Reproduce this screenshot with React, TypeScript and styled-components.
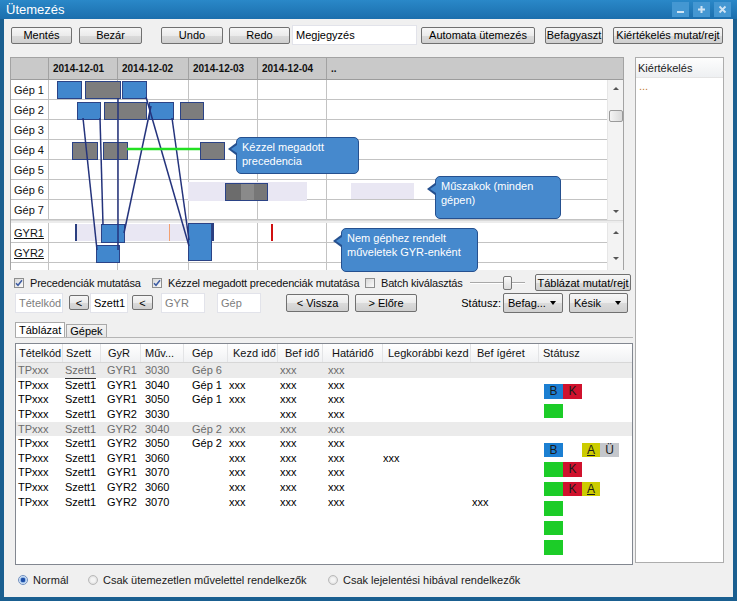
import React from "react";
import styled, { createGlobalStyle } from "styled-components";

const GlobalStyle = createGlobalStyle`
  html, body { margin: 0; padding: 0; background: #185c8c; }
  body { font-family: "Liberation Sans", Arial, Helvetica, sans-serif; font-size: 11px; color: #000; }
  *, *::before, *::after { box-sizing: border-box; }
`;

/* ---------- window frame ---------- */
const Window = styled.div`
  width: 737px;
  height: 601px;
  display: flex;
  flex-direction: column;
  background: #1a5f90;
  overflow: hidden;
`;
const TitleBar = styled.div`
  flex: none;
  height: 19px;
  display: flex;
  align-items: center;
  justify-content: space-between;
  padding: 0 6px 0 6px;
  background: linear-gradient(#2a88c8, #1b6ead);
`;
const TitleText = styled.span`
  color: #fff;
  font-size: 13px;
  line-height: 19px;
`;
const WinButtons = styled.div`
  display: flex;
  gap: 4px;
`;
const WinButton = styled.div`
  width: 17px;
  height: 15px;
  background: #4497d2;
  display: flex;
  align-items: center;
  justify-content: center;
`;
const Body = styled.div`
  flex: 1;
  margin: 0 4px 4px;
  background: #f0f0f0;
  display: flex;
  flex-direction: column;
  padding: 6px 0 0 6px;
`;

/* ---------- buttons & inputs ---------- */
const Btn = styled.div<{ $w: number; $ml?: number; $h?: number }>`
  flex: none;
  width: ${(p) => p.$w}px;
  height: ${(p) => p.$h ?? 17}px;
  margin-left: ${(p) => p.$ml ?? 0}px;
  border: 1px solid #707070;
  border-radius: 2px;
  background: linear-gradient(#f6f6f6 0%, #ebebeb 50%, #dbdbdb 51%, #cfcfcf 100%);
  display: flex;
  align-items: center;
  justify-content: center;
  white-space: nowrap;
  color: #000;
`;
const Input = styled.div<{ $w: number; $ml?: number; $muted?: boolean; $h?: number }>`
  flex: none;
  width: ${(p) => p.$w}px;
  height: ${(p) => p.$h ?? 20}px;
  margin-left: ${(p) => p.$ml ?? 0}px;
  background: #fff;
  border: 1px solid #e2e3ea;
  display: flex;
  align-items: center;
  padding-left: 3px;
  color: ${(p) => (p.$muted ? "#7d7d7d" : "#000")};
  white-space: nowrap;
`;
const Select = styled(Btn)`
  justify-content: space-between;
  padding: 0 6px 0 4px;
  height: 20px;
`;
const Caret = styled.span`
  width: 0;
  height: 0;
  border-left: 3.5px solid transparent;
  border-right: 3.5px solid transparent;
  border-top: 4px solid #000;
`;

const Toolbar = styled.div`
  flex: none;
  height: 20px;
  display: flex;
  align-items: center;
`;

/* ---------- main ---------- */
const Main = styled.div`
  flex: none;
  height: 508px;
  margin-top: 12px;
  display: flex;
  align-items: flex-start;
`;
const LeftCol = styled.div`
  width: 623px;
  height: 508px;
  display: flex;
  flex-direction: column;
`;
const RightPanel = styled.div`
  margin-left: 2px;
  width: 89px;
  height: 506px;
  border: 1px solid #adadad;
  background: #fff;
  display: flex;
  flex-direction: column;
`;
const RightHead = styled.div`
  height: 20px;
  background: linear-gradient(#fdfdfd, #eef0f2);
  border-bottom: 1px solid #e4e4e4;
  padding-left: 2px;
  display: flex;
  align-items: center;
  color: #1b1b1b;
`;
const RightDots = styled.div`
  padding: 3px 0 0 3px;
  color: #c07a30;
  line-height: 11px;
`;

/* ---------- gantt ---------- */
const GRID = "38px 69px 71px 69px 69px 1fr";
const Gantt = styled.div`
  position: relative;
  width: 614px;
  border: 1px solid #a3a3a3;
  border-bottom: none;
  background: #fff;
  display: flex;
  flex-direction: column;
`;
const GHead = styled.div`
  display: grid;
  grid-template-columns: ${GRID};
  height: 22px;
  background: #c9c9c9;
  border-bottom: 1px solid #9c9c9c;
`;
const GHeadCell = styled.div`
  border-right: 1px solid #a2a2a2;
  padding-left: 4px;
  display: flex;
  align-items: center;
  font-weight: bold;
  font-size: 10px;
  color: #111;
  &:last-child { border-right: none; }
`;
const Pane = styled.div<{ $h: number }>`
  height: ${(p) => p.$h}px;
  display: flex;
  overflow: hidden;
`;
const PaneRows = styled.div`
  flex: 1;
  display: flex;
  flex-direction: column;
`;
const GRow = styled.div`
  flex: none;
  display: grid;
  grid-template-columns: ${GRID};
  height: 20px;
  border-bottom: 1px solid #c3c3c3;
`;
const GCell = styled.div`
  border-right: 1px solid #c3c3c3;
  &:last-child { border-right: none; }
`;
const GLabel = styled(GCell)<{ $u?: boolean }>`
  display: flex;
  align-items: center;
  padding-left: 3px;
  text-decoration: ${(p) => (p.$u ? "underline" : "none")};
  color: #111;
`;
const Splitter = styled.div`
  height: 3px;
  background: #ececec;
  border-top: 1px solid #d8d8d8;
`;
const VScroll = styled.div`
  width: 16px;
  flex: none;
  background: #f3f3f3;
  border-left: 1px solid #e6e6e6;
  display: flex;
  flex-direction: column;
  align-items: center;
`;
const ArrowUp = styled.span<{ $mt?: number }>`
  margin-top: ${(p) => p.$mt ?? 0}px;
  width: 0;
  height: 0;
  border-left: 3px solid transparent;
  border-right: 3px solid transparent;
  border-bottom: 3px solid #555;
`;
const ArrowDown = styled.span<{ $mb?: number }>`
  margin-bottom: ${(p) => p.$mb ?? 0}px;
  width: 0;
  height: 0;
  border-left: 3px solid transparent;
  border-right: 3px solid transparent;
  border-top: 3px solid #555;
`;
const Thumb = styled.div`
  margin-top: 20px;
  width: 14px;
  height: 12px;
  border: 1px solid #9a9a9a;
  border-radius: 2px;
  background: linear-gradient(90deg, #f4f4f4, #dadada);
`;
const Spacer = styled.div`
  flex: 1;
`;

const OX = 11;
const OY = 58;
const Canvas = styled.div`
  position: absolute;
  left: 0;
  top: 0;
  right: 0;
  bottom: 0;
  pointer-events: none;
`;
const Bar = styled.div<{ $k: "blue" | "gray" | "stripe" }>`
  position: absolute;
  border: 1.5px solid #2b4386;
  background: ${(p) =>
    p.$k === "blue"
      ? "#4187cd"
      : p.$k === "gray"
      ? "#7d7d7d"
      : "linear-gradient(90deg, #6c6c6c 0 36%, #8a8a8a 36% 68%, #777 68% 100%)"};
`;
const Shift = styled.div`
  position: absolute;
  background: #e9e7f3;
`;
const Tick = styled.div`
  position: absolute;
`;
const LinesSvg = styled.svg`
  position: absolute;
  left: 0;
  top: 0;
  overflow: visible;
`;
const Callout = styled.div<{ $py: number }>`
  position: absolute;
  background: #4689cd;
  border: 1.5px solid #25508f;
  border-radius: 5px;
  color: #fff;
  font-size: 11px;
  line-height: 13.5px;
  padding: 3px 4px 0 5px;
  &::before {
    content: "";
    position: absolute;
    left: -9px;
    top: ${(p) => p.$py - 6}px;
    border-top: 6px solid transparent;
    border-bottom: 6px solid transparent;
    border-right: 8px solid #25508f;
  }
  &::after {
    content: "";
    position: absolute;
    left: -6px;
    top: ${(p) => p.$py - 4.5}px;
    border-top: 4.5px solid transparent;
    border-bottom: 4.5px solid transparent;
    border-right: 6px solid #4689cd;
  }
`;

/* ---------- checkbox row ---------- */
const CheckRow = styled.div`
  flex: none;
  margin-top: 4px;
  height: 17px;
  display: flex;
  align-items: center;
  padding-left: 4px;
`;
const CheckGroup = styled.div<{ $w: number }>`
  width: ${(p) => p.$w}px;
  flex: none;
  display: flex;
  align-items: center;
  gap: 6px;
  white-space: nowrap;
  letter-spacing: -0.2px;
  color: #111;
`;
const Box = styled.span`
  width: 10px;
  height: 10px;
  flex: none;
  border: 1px solid #8e8f8f;
  background: linear-gradient(135deg, #d8d8d8, #fbfbfb);
  display: flex;
  align-items: center;
  justify-content: center;
`;
const Slider = styled.div`
  width: 55px;
  flex: none;
  height: 14px;
  display: flex;
  align-items: center;
  position: relative;
`;
const Track = styled.div`
  flex: 1;
  height: 2px;
  border-top: 1px solid #a8a8a8;
  border-bottom: 1px solid #fff;
`;
const SliderThumb = styled.div`
  position: absolute;
  left: 33px;
  top: 0;
  width: 9px;
  height: 14px;
  border: 1px solid #767676;
  border-radius: 2px;
  background: linear-gradient(#fbfbfb, #dcdcdc);
`;

/* ---------- filter row ---------- */
const FilterRow = styled.div`
  flex: none;
  margin-top: 1px;
  height: 21px;
  display: flex;
  align-items: center;
`;
const Label = styled.div<{ $w: number }>`
  width: ${(p) => p.$w}px;
  flex: none;
  text-align: right;
  white-space: nowrap;
`;

/* ---------- tabs & table ---------- */
const TabStrip = styled.div`
  flex: none;
  margin-top: 9px;
  height: 15px;
  display: flex;
  align-items: flex-end;
  padding-left: 5px;
`;
const Tab = styled.div<{ $on?: boolean }>`
  height: ${(p) => (p.$on ? 15 : 13)}px;
  padding: 0 3px 0 3px;
  border: 1px solid #a9a9a9;
  border-bottom: none;
  background: ${(p) => (p.$on ? "#fff" : "linear-gradient(#f2f2f2, #e4e4e4)")};
  display: flex;
  align-items: center;
  margin-left: ${(p) => (p.$on ? 0 : 1)}px;
`;
const TabPanel = styled.div`
  flex: 1;
  margin-left: 5px;
  width: 618px;
  border-top: 1px solid #b5b5b5;
  display: flex;
  flex-direction: column;
`;
const TCOLS = "47px 38px 40px 43px 44px 50px 45px 60px 88px 68px 1fr";
const Table = styled.div`
  flex: 1;
  margin-top: 5px;
  border: 1px solid #828790;
  background: #fff;
  display: flex;
  flex-direction: column;
`;
const THead = styled.div`
  flex: none;
  display: grid;
  grid-template-columns: ${TCOLS};
  height: 19px;
  background: linear-gradient(#ffffff, #f0f1f3);
  border-bottom: 1px solid #d7d7d7;
`;
const THCell = styled.div<{ $pl: number }>`
  padding-left: ${(p) => p.$pl}px;
  border-right: 1px solid #e3e4e6;
  display: flex;
  align-items: center;
  white-space: nowrap;
  color: #111;
  &:last-child { border-right: none; }
`;
const TBody = styled.div`
  display: grid;
  flex: 1;
  align-content: start;
`;
const Layer = styled.div`
  grid-area: 1 / 1;
  display: flex;
  flex-direction: column;
`;
const TRow = styled.div<{ $dim?: boolean }>`
  display: grid;
  grid-template-columns: ${TCOLS};
  height: 14.65px;
  background: ${(p) => (p.$dim ? "#ebebeb" : "transparent")};
  color: ${(p) => (p.$dim ? "#6b6b6b" : "#000")};
`;
const TCell = styled.div<{ $pl: number }>`
  padding-left: ${(p) => p.$pl}px;
  line-height: 14.65px;
  white-space: nowrap;
  overflow: hidden;
`;
const Focused = styled.span`
  border-top: 1px solid #333;
`;
const StatusLayer = styled(Layer)`
  padding: 21px 0 0 528px;
`;
const Slot = styled.div`
  height: 19.5px;
  display: flex;
`;
const Badge = styled.div<{ $c: string; $w?: number }>`
  width: ${(p) => p.$w ?? 19}px;
  height: 14.5px;
  background: ${(p) => p.$c};
  display: flex;
  align-items: center;
  justify-content: center;
  font-size: 12px;
  color: #1a1a1a;
`;
const Gap = styled.div`
  width: 19px;
`;

/* ---------- radio row ---------- */
const RadioRow = styled.div`
  flex: none;
  margin-top: 7px;
  height: 16px;
  display: flex;
  align-items: center;
  padding-left: 8px;
`;
const RadioGroup = styled.div<{ $w: number }>`
  width: ${(p) => p.$w}px;
  flex: none;
  display: flex;
  align-items: center;
  gap: 5px;
  white-space: nowrap;
  color: #1a1a1a;
`;
const Radio = styled.span<{ $on?: boolean }>`
  width: 10px;
  height: 10px;
  flex: none;
  border-radius: 50%;
  border: 1px solid ${(p) => (p.$on ? "#6f8fbf" : "#b9b9b9")};
  background: ${(p) =>
    p.$on
      ? "radial-gradient(circle, #1f4fa8 0 2px, #8fb6e6 2.5px, #e8f0fa 4px)"
      : "radial-gradient(circle, #f4f4f4 0 2px, #e0e0e0 4px)"};
`;

/* ---------- data ---------- */
type BarDef = { x1: number; x2: number; y1: number; y2: number; k: "blue" | "gray" | "stripe" };
const BARS: BarDef[] = [
  { x1: 57, x2: 81, y1: 81, y2: 98, k: "blue" },
  { x1: 85, x2: 120, y1: 81, y2: 98, k: "gray" },
  { x1: 122, x2: 146, y1: 81, y2: 98, k: "blue" },
  { x1: 77, x2: 100, y1: 102, y2: 119, k: "blue" },
  { x1: 104, x2: 146, y1: 102, y2: 119, k: "gray" },
  { x1: 149, x2: 173, y1: 102, y2: 119, k: "blue" },
  { x1: 180, x2: 203, y1: 102, y2: 119, k: "gray" },
  { x1: 72, x2: 97, y1: 142, y2: 159, k: "gray" },
  { x1: 103, x2: 127, y1: 142, y2: 159, k: "gray" },
  { x1: 200, x2: 224, y1: 142, y2: 159, k: "gray" },
  { x1: 225, x2: 267, y1: 183, y2: 200, k: "stripe" },
  { x1: 101, x2: 124, y1: 224, y2: 242, k: "blue" },
  { x1: 188, x2: 211, y1: 223, y2: 260, k: "blue" },
  { x1: 96, x2: 119, y1: 245, y2: 262, k: "blue" },
];
const SHIFTS = [
  { x1: 188, x2: 307, y1: 182, y2: 201 },
  { x1: 351, x2: 414, y1: 183, y2: 199 },
  { x1: 75, x2: 188, y1: 224, y2: 241 },
];
const TICKS = [
  { x: 75, w: 1.5, y1: 224, y2: 241, c: "#2b3f80" },
  { x: 169, w: 1.2, y1: 224, y2: 241, c: "#f3a070" },
  { x: 212, w: 2, y1: 223, y2: 241, c: "#2b3f80" },
  { x: 271, w: 2, y1: 224, y2: 241, c: "#d01010" },
];
const LINES = [
  [83, 118, 97, 250],
  [118, 98, 118, 250],
  [100, 118, 103, 225],
  [151, 106, 124, 233],
  [146, 97, 189, 246],
  [172, 118, 189, 240],
];

const HEADERS = ["Tételkód", "Szett", "GyR", "Műv...", "Gép", "Kezd idő", "Bef idő", "Határidő", "Legkorábbi kezd", "Bef ígéret", "Státusz"];
const HPAD = [3, 3, 7, 4, 8, 5, 7, 9, 5, 6, 4];
const DPAD = [2, 2, 6, 4, 8, 1, 2, 5, 0, 1, 0];
type RowDef = { c: string[]; dim?: boolean };
const ROWS: RowDef[] = [
  { c: ["TPxxx", "Szett1", "GYR1", "3030", "Gép 6", "", "xxx", "xxx", "", ""], dim: true },
  { c: ["TPxxx", "Szett1", "GYR1", "3040", "Gép 1", "xxx", "xxx", "xxx", "", ""] },
  { c: ["TPxxx", "Szett1", "GYR1", "3050", "Gép 1", "xxx", "xxx", "xxx", "", ""] },
  { c: ["TPxxx", "Szett1", "GYR2", "3030", "", "", "xxx", "xxx", "", ""] },
  { c: ["TPxxx", "Szett1", "GYR2", "3040", "Gép 2", "xxx", "xxx", "xxx", "", ""], dim: true },
  { c: ["TPxxx", "Szett1", "GYR2", "3050", "Gép 2", "xxx", "xxx", "xxx", "", ""] },
  { c: ["TPxxx", "Szett1", "GYR1", "3060", "", "xxx", "xxx", "xxx", "xxx", ""] },
  { c: ["TPxxx", "Szett1", "GYR1", "3070", "", "xxx", "xxx", "xxx", "", ""] },
  { c: ["TPxxx", "Szett1", "GYR2", "3060", "", "xxx", "xxx", "xxx", "", ""] },
  { c: ["TPxxx", "Szett1", "GYR2", "3070", "", "xxx", "xxx", "xxx", "", "xxx"] },
];
const B = "#1b7fd2";
const K = "#d0122d";
const G = "#1ccc28";
const A = "#cccc00";
const U = "#c4c7cc";
type St = { c: string; t?: string; u?: boolean; w?: number } | null;
const STATUS: St[][] = [
  [{ c: B, t: "B" }, { c: K, t: "K" }],
  [{ c: G }],
  [],
  [{ c: B, t: "B" }, null, { c: A, t: "A", u: true, w: 18 }, { c: U, t: "Ü" }],
  [{ c: G }, { c: K, t: "K" }],
  [{ c: G }, { c: K, t: "K" }, { c: A, t: "A", u: true, w: 18 }],
  [{ c: G }],
  [{ c: G }],
  [{ c: G }],
];

const Check = () => (
  <svg width="8" height="8" viewBox="0 0 8 8">
    <path d="M1 4.2 L3 6.3 L7 1.2" fill="none" stroke="#3c5ba3" strokeWidth="1.5" />
  </svg>
);

export default function App() {
  return (
    <>
      <GlobalStyle />
      <Window>
        <TitleBar>
          <TitleText>Ütemezés</TitleText>
          <WinButtons>
            <WinButton>
              <svg width="9" height="9" viewBox="0 0 9 9"><rect x="1" y="6" width="7" height="2" fill="#cfe4f4" /></svg>
            </WinButton>
            <WinButton>
              <svg width="9" height="9" viewBox="0 0 9 9"><path d="M4.5 1 V8 M1 4.5 H8" stroke="#cfe4f4" strokeWidth="2" /></svg>
            </WinButton>
            <WinButton>
              <svg width="9" height="9" viewBox="0 0 9 9"><path d="M1.5 1.5 L7.5 7.5 M7.5 1.5 L1.5 7.5" stroke="#cfe4f4" strokeWidth="1.8" /></svg>
            </WinButton>
          </WinButtons>
        </TitleBar>
        <Body>
          <Toolbar>
            <Btn $w={61} $ml={1}>Mentés</Btn>
            <Btn $w={63} $ml={7}>Bezár</Btn>
            <Btn $w={62} $ml={19}>Undo</Btn>
            <Btn $w={61} $ml={6}>Redo</Btn>
            <Input $w={125} $ml={2}>Megjegyzés</Input>
            <Btn $w={114} $ml={4}>Automata ütemezés</Btn>
            <Btn $w={58} $ml={10}>Befagyaszt</Btn>
            <Btn $w={110} $ml={10}>Kiértékelés mutat/rejt</Btn>
          </Toolbar>
          <Main>
            <LeftCol>
              <Gantt>
                <GHead>
                  <GHeadCell />
                  <GHeadCell>2014-12-01</GHeadCell>
                  <GHeadCell>2014-12-02</GHeadCell>
                  <GHeadCell>2014-12-03</GHeadCell>
                  <GHeadCell>2014-12-04</GHeadCell>
                  <GHeadCell>..</GHeadCell>
                </GHead>
                <Pane $h={140}>
                  <PaneRows>
                    {["Gép 1", "Gép 2", "Gép 3", "Gép 4", "Gép 5", "Gép 6", "Gép 7"].map((g) => (
                      <GRow key={g}>
                        <GLabel>{g}</GLabel>
                        <GCell />
                        <GCell />
                        <GCell />
                        <GCell />
                        <GCell />
                      </GRow>
                    ))}
                  </PaneRows>
                  <VScroll>
                    <ArrowUp $mt={7} />
                    <Thumb />
                    <Spacer />
                    <ArrowDown $mb={7} />
                  </VScroll>
                </Pane>
                <Splitter />
                <Pane $h={47}>
                  <PaneRows>
                    {["GYR1", "GYR2", ""].map((g, i) => (
                      <GRow key={i}>
                        <GLabel $u>{g}</GLabel>
                        <GCell />
                        <GCell />
                        <GCell />
                        <GCell />
                        <GCell />
                      </GRow>
                    ))}
                  </PaneRows>
                  <VScroll>
                    <ArrowUp $mt={8} />
                    <Spacer />
                    <ArrowDown $mb={10} />
                  </VScroll>
                </Pane>
                <Canvas>
                  {SHIFTS.map((s, i) => (
                    <Shift key={i} style={{ left: s.x1 - OX, top: s.y1 - OY, width: s.x2 - s.x1, height: s.y2 - s.y1 }} />
                  ))}
                  {BARS.map((b, i) => (
                    <Bar key={i} $k={b.k} style={{ left: b.x1 - OX, top: b.y1 - OY, width: b.x2 - b.x1 + 1, height: b.y2 - b.y1 + 1 }} />
                  ))}
                  {TICKS.map((t, i) => (
                    <Tick key={i} style={{ left: t.x - OX, top: t.y1 - OY, width: t.w, height: t.y2 - t.y1, background: t.c }} />
                  ))}
                  <LinesSvg width="614" height="214">
                    <g transform={`translate(${-OX} ${-OY})`}>
                      {LINES.map((l, i) => (
                        <line key={i} x1={l[0]} y1={l[1]} x2={l[2]} y2={l[3]} stroke="#24337c" strokeWidth="1.5" />
                      ))}
                      <line x1={127} y1={149} x2={200} y2={149} stroke="#22e022" strokeWidth="2.5" />
                    </g>
                  </LinesSvg>
                  <Callout $py={11} style={{ left: 236 - OX, top: 137 - OY, width: 123, height: 37 }}>
                    Kézzel megadott<br />precedencia
                  </Callout>
                  <Callout $py={12} style={{ left: 435 - OX, top: 176 - OY, width: 126, height: 43 }}>
                    Műszakok (minden<br />gépen)
                  </Callout>
                  <Callout $py={12} style={{ left: 341 - OX, top: 228 - OY, width: 137, height: 44 }}>
                    Nem géphez rendelt<br />műveletek GYR-enként
                  </Callout>
                </Canvas>
              </Gantt>

              <CheckRow>
                <CheckGroup $w={138}>
                  <Box><Check /></Box>Precedenciák mutatása
                </CheckGroup>
                <CheckGroup $w={213}>
                  <Box><Check /></Box>Kézzel megadott precedenciák mutatása
                </CheckGroup>
                <CheckGroup $w={105}>
                  <Box />Batch kiválasztás
                </CheckGroup>
                <Slider>
                  <Track />
                  <SliderThumb />
                </Slider>
                <Btn $w={96} $ml={10}>Táblázat mutat/rejt</Btn>
              </CheckRow>

              <FilterRow>
                <Input $w={48} $ml={5} $muted>Tételkód</Input>
                <Btn $w={20} $ml={6} $h={15}>&lt;</Btn>
                <Input $w={38} $ml={1}>Szett1</Input>
                <Btn $w={21} $ml={4} $h={15}>&lt;</Btn>
                <Input $w={44} $ml={8} $muted>GYR</Input>
                <Input $w={44} $ml={12} $muted>Gép</Input>
                <Btn $w={63} $ml={25} $h={18}>&lt; Vissza</Btn>
                <Btn $w={62} $ml={6} $h={18}>&gt; Előre</Btn>
                <Label $w={84}>Státusz:</Label>
                <Select $w={60} $ml={2}>Befag...<Caret /></Select>
                <Select $w={59} $ml={6}>Késik<Caret /></Select>
              </FilterRow>

              <TabStrip>
                <Tab $on>Táblázat</Tab>
                <Tab>Gépek</Tab>
              </TabStrip>
              <TabPanel>
                <Table>
                  <THead>
                    {HEADERS.map((h, i) => (
                      <THCell key={h} $pl={HPAD[i]}>{h}</THCell>
                    ))}
                  </THead>
                  <TBody>
                    <Layer>
                      {ROWS.map((r, ri) => (
                        <TRow key={ri} $dim={r.dim}>
                          {r.c.map((v, ci) => (
                            <TCell key={ci} $pl={DPAD[ci]}>
                              {ri === 1 && ci === 1 ? <Focused>{v}</Focused> : v}
                            </TCell>
                          ))}
                          <TCell $pl={0} />
                        </TRow>
                      ))}
                    </Layer>
                    <StatusLayer>
                      {STATUS.map((s, si) => (
                        <Slot key={si}>
                          {s.map((b, bi) =>
                            b ? (
                              <Badge key={bi} $c={b.c} $w={b.w}>
                                {b.u ? <u>{b.t}</u> : b.t}
                              </Badge>
                            ) : (
                              <Gap key={bi} />
                            )
                          )}
                        </Slot>
                      ))}
                    </StatusLayer>
                  </TBody>
                </Table>
              </TabPanel>
            </LeftCol>
            <RightPanel>
              <RightHead>Kiértékelés</RightHead>
              <RightDots>...</RightDots>
            </RightPanel>
          </Main>
          <RadioRow>
            <RadioGroup $w={70}>
              <Radio $on />Normál
            </RadioGroup>
            <RadioGroup $w={240}>
              <Radio />Csak ütemezetlen művelettel rendelkezők
            </RadioGroup>
            <RadioGroup $w={250}>
              <Radio />Csak lejelentési hibával rendelkezők
            </RadioGroup>
          </RadioRow>
        </Body>
      </Window>
    </>
  );
}
